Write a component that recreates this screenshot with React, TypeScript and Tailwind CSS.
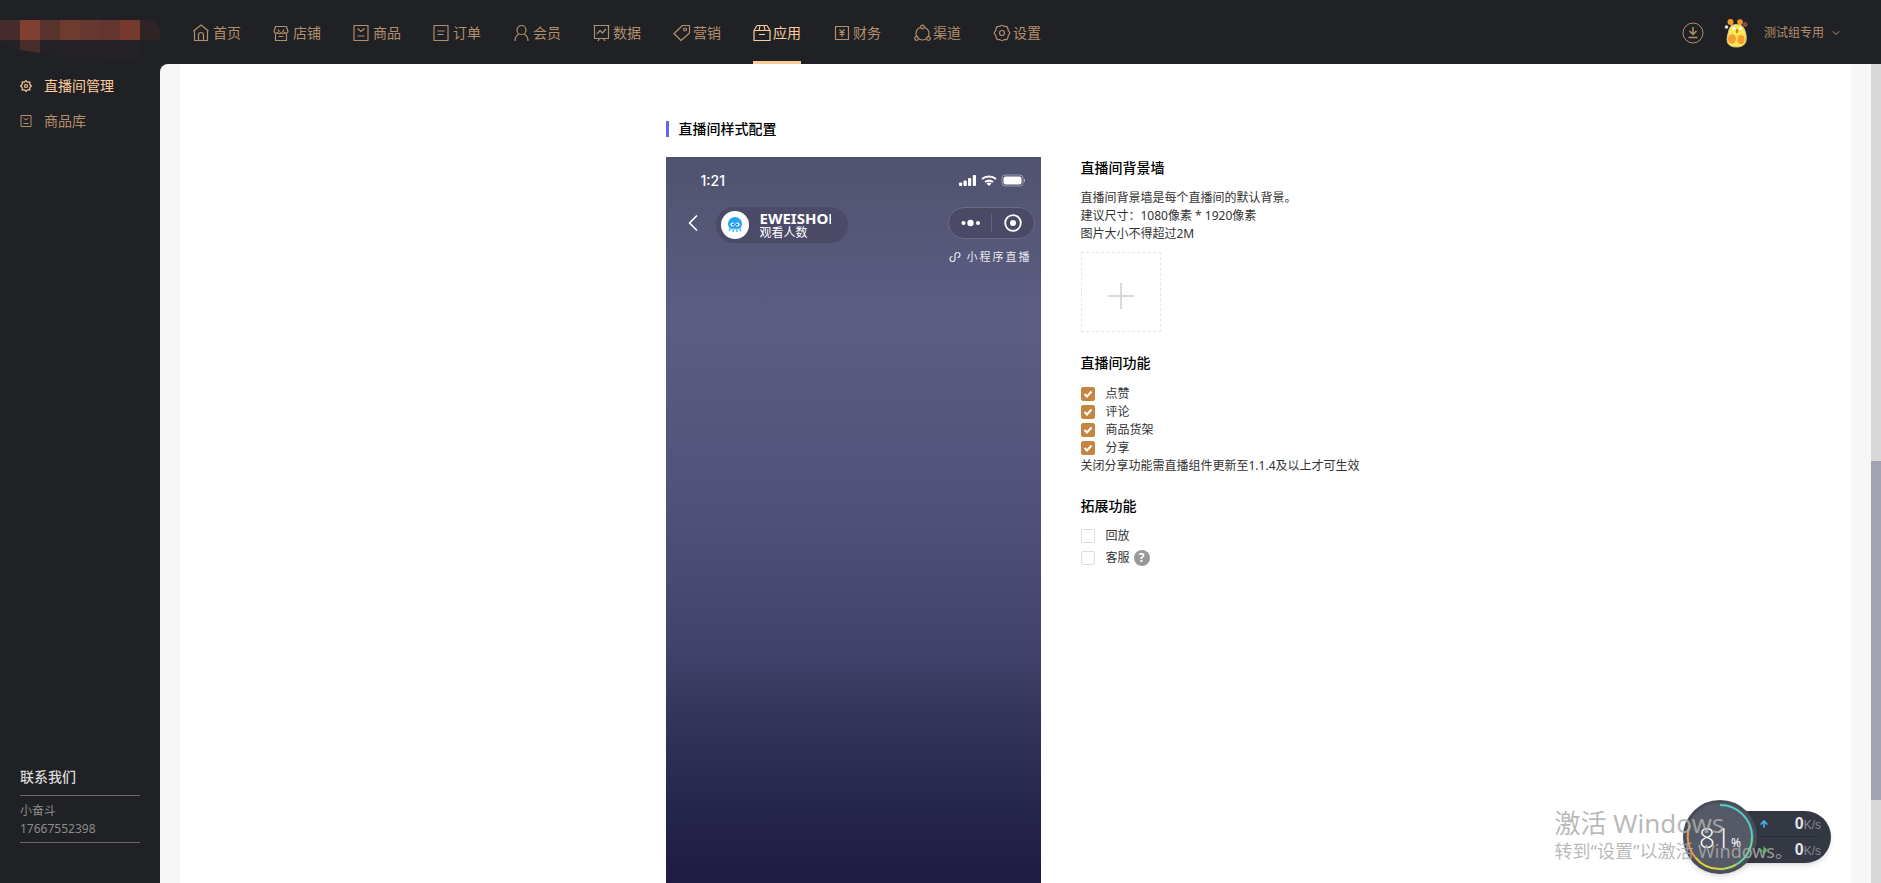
import React from "react";
import { ArrowDown, ArrowUp, ChevronDown, ChevronLeft } from "lucide-react";

const iconPaths: Record<string, React.ReactNode> = {
  home: (
    <>
      <path d="M.5 7L8 1L15.500 7M1.500 6.500V16.500H14.500V6.500" />
      <path d="M5.500 16V11A2.500 2.500 0 0 1 10.500 11V16" />
    </>
  ),
  shop: (
    <>
      <path d="M2.500 2.500H13.500L15 7.500A2 2 0 0 1 11.500 8.500A2 2 0 0 1 8 8.500A2 2 0 0 1 4.500 8.500A2 2 0 0 1 1 7.500Z" />
      <path d="M2.500 9.500V16.500H13.500V9.500M5 5.500L6.500 8M11 5.500L9.500 8M5.500 12.500H10.500" />
    </>
  ),
  goods: (
    <>
      <path d="M1 1.500H15V16.500H1Z" />
      <path d="M4.500 4.500L8 7.500L11.500 4.500M4.500 12H11.500" />
    </>
  ),
  order: (
    <>
      <path d="M1 1.500H15V16.500H1Z" />
      <path d="M4.500 7H11.500M4.500 10.500H10.500" />
    </>
  ),
  member: (
    <>
      <circle cx="8.500" cy="6" r="4.500" />
      <path d="M2 17C2 13 4 11 6 10M15 17C15 13 13 11 11 10" />
    </>
  ),
  data: (
    <>
      <path d="M.5 1.500H16.500M1.500 1.500V14.500H15.500V1.500M6.500 14.500L5 17M10.500 14.500L12 17" />
      <path d="M4 10L7 6.500L9.500 9L13 5" />
    </>
  ),
  sale: (
    <>
      <path d="M9.500 1.500L1 9.500L8 16.500L16.500 9V1.500Z" />
      <circle cx="12" cy="5.500" r="1.500" />
    </>
  ),
  app: (
    <path d="M1 6.500L4 1.500H14L17 6.500V16.500H1ZM1 6.500H17M7 1.500L6 6.500M11 1.500L12 6.500M6 10.500H12" />
  ),
  finance: (
    <>
      <path d="M2.500 2.500H15.500V15.500H2.500Z" />
      <path d="M6.500 5.500L9 8L11.500 5.500M6.500 8.500H11.500M6.500 10.500H11.500M9 8V13" />
    </>
  ),
  channel: (
    <>
      <circle cx="9.500" cy="9.500" r="6.500" />
      <g fill="#202125">
        <circle cx="9.500" cy="3" r="1.800" />
        <circle cx="3.500" cy="14.500" r="1.800" />
        <circle cx="15.500" cy="14.500" r="1.800" />
      </g>
    </>
  ),
  setting: (
    <>
      <path d="M7 2.500Q9 0 11 2.500Q14.500 1.500 15 5Q15 6 15.500 7Q18 9 15.500 11Q15 12 15 13Q14.500 16.500 11 15.500Q9 18 7 15.500Q3.500 16.500 3 13Q3 12 2.500 11Q0 9 2.500 7Q3 6 3 5Q3.500 1.500 7 2.500Z" />
      <circle cx="9" cy="9" r="2.500" />
    </>
  ),
};

const Icon = ({ name }: { name: string }) => (
  <svg
    width="18"
    height="18"
    viewBox="0 0 18 18"
    fill="none"
    stroke="currentColor"
    strokeWidth="1.200"
    strokeLinejoin="round"
    className="shrink-0"
    aria-hidden="true"
  >
    {iconPaths[name]}
  </svg>
);

const navItems = [
  { label: "首页", icon: "home" },
  { label: "店铺", icon: "shop" },
  { label: "商品", icon: "goods" },
  { label: "订单", icon: "order" },
  { label: "会员", icon: "member" },
  { label: "数据", icon: "data" },
  { label: "营销", icon: "sale" },
  { label: "应用", icon: "app", active: true },
  { label: "财务", icon: "finance" },
  { label: "渠道", icon: "channel" },
  { label: "设置", icon: "setting" },
];

const Avatar = () => (
  <svg width="24" height="30" viewBox="0 0 24 30" aria-hidden="true">
    <path d="M8 9L7 4M16 9L17 4" stroke="#d9c7a0" strokeWidth="1.500" />
    <circle cx="6.500" cy="4" r="3" fill="#f59a23" />
    <circle cx="16" cy="4" r="2.800" fill="#f59a23" />
    <circle cx="21" cy="6.500" r="2.500" fill="#8c4b3f" />
    <circle cx="2.500" cy="9" r="1.800" fill="#e8dde6" />
    <path d="M12.500 6.500C6 6.500 5 11 4 16C1.500 24 4 29 12.500 29S23 24 22 17C21 11 19 6.500 12.500 6.500Z" fill="#fbe94e" stroke="#d8c79a" strokeWidth="1" />
    <circle cx="10" cy="10.500" r="1.600" fill="#fff" />
    <circle cx="16.500" cy="10.500" r="1.600" fill="#fff" />
    <ellipse cx="13" cy="13" rx="1.200" ry="2.200" fill="#e8743a" />
    <ellipse cx="8" cy="21" rx="4" ry="4.800" fill="#fb9d33" />
    <ellipse cx="17" cy="21.500" rx="3.600" ry="4.500" fill="#fb9d33" />
  </svg>
);

const Header = () => (
  <header className="h-16 shrink-0 flex items-center bg-[#202125] text-[#b38e6a]">
    {/* Store logo */}
    <div className="w-[160px] mr-[33px] shrink-0">
      <svg width="160" height="64" viewBox="0 0 160 64" className="block" role="img" aria-label="logo">
        <path d="M0 20H20V40H0Z" fill="#452b2b" />
        <path d="M20 20H40V40H20Z" fill="#813f31" />
        <path d="M40 20H60V40H40Z" fill="#57332c" />
        <path d="M60 20H80V40H60Z" fill="#6e3b2e" />
        <path d="M80 20H100V40H80Z" fill="#66382f" />
        <path d="M100 20H120V40H100Z" fill="#63352e" />
        <path d="M120 20H140V40H120Z" fill="#76392e" />
        <path d="M140 20H147Q158 21 160 30V40H140Z" fill="#302325" />
        <path d="M0 40H20V50Q8 48 0 43Z" fill="#242225" />
        <path d="M20 40H40V53L20 50Z" fill="#482c2a" />
        <path d="M40 40H140V60Q80 58 40 53Z" fill="#242225" />
      </svg>
    </div>
    <nav className="h-full flex gap-8">
      {navItems.map((item) => (
        <a
          key={item.label}
          href="#"
          className={
            item.active
              ? "h-full pt-0.5 flex items-center gap-0.5 whitespace-nowrap text-sm border-y-3 border-t-transparent border-b-[#fccb9a] text-[#fccb9a]"
              : "h-full pt-0.5 flex items-center gap-0.5 whitespace-nowrap text-sm border-y-3 border-transparent"
          }
        >
          <Icon name={item.icon} />
          {item.label}
        </a>
      ))}
    </nav>
    <div className="ml-auto mr-[39px] pt-0.5 flex items-center">
      <button aria-label="下载" className="mr-5">
        <svg width="22" height="22" viewBox="0 0 22 22" fill="none" stroke="currentColor">
          <circle cx="11" cy="11" r="10" />
          <path d="M11 5V12M7.500 9L11 12.500L14.500 9M6.500 15.500H15.500" strokeWidth="1.500" />
        </svg>
      </button>
      <Avatar />
      <button className="ml-4 flex items-center gap-1.5 text-xs whitespace-nowrap">
        测试组专用
        <ChevronDown size={12} />
      </button>
    </div>
  </header>
);

const Sidebar = () => (
  <aside className="w-[160px] shrink-0 flex flex-col justify-between px-5 pt-1 pb-10 bg-[#202125]">
    <nav className="flex flex-col text-sm text-[#b38e6a]">
      <a href="#" className="flex items-center gap-3 h-[35px] text-[#fccb9a]">
        <svg width="12" height="12" viewBox="0 0 12 12" fill="none" stroke="currentColor" strokeWidth="1.200" aria-hidden="true">
          <path d="M6 .6L7.500 2.200L9.800 2.200L9.800 4.500L11.400 6L9.800 7.500V9.800H7.500L6 11.400L4.500 9.800H2.200V7.500L.6 6L2.200 4.500V2.200H4.500Z" />
          <circle cx="6" cy="6" r="1.500" />
        </svg>
        直播间管理
      </a>
      <a href="#" className="flex items-center gap-3 h-[35px]">
        <svg width="12" height="12" viewBox="0 0 12 12" fill="none" stroke="currentColor" aria-hidden="true">
          <path d="M1 .5H11V11.500H1ZM3.500 3L6 5L8.500 3M3.500 8.500H8.500" />
        </svg>
        商品库
      </a>
    </nav>
    <div className="text-xs text-[#8b8b8d]">
      <h3 className="pb-2 text-sm font-medium text-[#d9d9d9]">联系我们</h3>
      <div className="pt-1.5 pb-1 border-y border-[#6a6a6c] leading-[18px]">
        <p>小奋斗</p>
        <p>17667552398</p>
      </div>
    </div>
  </aside>
);

const PhonePreview = () => (
  <div className="w-[375px] h-[812px] shrink-0 bg-[linear-gradient(#50536e,#5b5d83_20%,#515279_42%,#43426b_60%,#36365c_68%,#26254c_80%,#1e1c41_89%,#1b193b)] text-white">
    <div className="h-12 flex items-center pl-[35px] pr-[15px] text-sm">
      <span className="font-[Inter] font-medium">1:21</span>
      <svg width="68" height="14" viewBox="0 0 68 14" fill="#fff" className="ml-auto" aria-hidden="true">
        <rect x="1" y="8.500" width="3.200" height="3.500" rx="1" />
        <rect x="5.500" y="6.500" width="3.200" height="5.500" rx="1" />
        <rect x="10" y="4" width="3.200" height="8" rx="1" />
        <rect x="14.800" y="1" width="3.200" height="11" rx="1" />
        <path d="M24 5A11 11 0 0 1 38 5M27 8A7 7 0 0 1 35 8" fill="none" stroke="#fff" strokeWidth="2" />
        <path d="M28.500 9.500Q31 7.500 33.500 9.500L31 12Z" />
        <rect x="44" y="1" width="21" height="11" rx="3" fill="none" stroke="#fff" strokeOpacity=".4" />
        <rect x="45.500" y="2.500" width="18" height="8" rx="2" />
        <path d="M66.500 5V8" stroke="#fff" strokeOpacity=".5" />
      </svg>
    </div>
    <div className="flex items-start pt-0.5 pl-[13px] pr-[6px]">
      <ChevronLeft size={28} strokeWidth={1.5} className="mt-0.5" />
      <div className="ml-[9px] w-[132px] h-9 px-[5px] flex items-center gap-[11px] rounded-full bg-[#4b4b67]">
        <svg width="28" height="28" viewBox="0 0 28 28" className="shrink-0" aria-hidden="true">
          <circle cx="14" cy="14" r="14" fill="#fff" />
          <path d="M7 12.500A7 6.500 0 0 1 21 12.500C21 15 20 16.500 19 18H9C8 16.500 7 15 7 12.500Z" fill="#25a4fb" />
          <path d="M10 17L8 20M12.500 17L12 21M15.500 17L16 21M18 17L20 20" stroke="#6cc0fb" strokeWidth="1.800" />
          <circle cx="11.500" cy="13.500" r="2" fill="#fff" />
          <circle cx="16.500" cy="13.500" r="2" fill="#fff" />
          <circle cx="12" cy="13.500" r="1" fill="#205b88" />
          <circle cx="16" cy="13.500" r="1" fill="#205b88" />
        </svg>
        <div className="w-[71px]">
          <p className="text-[15px] leading-4 font-bold whitespace-nowrap overflow-hidden">EWEISHOP</p>
          <p className="text-xs leading-[14px]">观看人数</p>
        </div>
      </div>
      <svg width="87" height="32" viewBox="0 0 87 32" className="ml-auto" aria-hidden="true">
        <rect x=".5" y=".5" width="86" height="31" rx="15.500" fill="#4a4a67" stroke="#6a6b85" />
        <path d="M43.500 6V25" stroke="#62637d" />
        <circle cx="15.500" cy="16" r="2" fill="#fff" />
        <circle cx="22.500" cy="16" r="3.200" fill="#fff" />
        <circle cx="30" cy="16" r="2" fill="#fff" />
        <circle cx="65" cy="16" r="7.800" fill="none" stroke="#fff" strokeWidth="1.800" />
        <circle cx="65" cy="16" r="3" fill="#fff" />
      </svg>
    </div>
    <div className="flex items-center justify-end gap-1.5 pt-[5px] pr-[9px] text-[11px] leading-[18px] tracking-[2px] text-[#e9e9f0]">
      <svg width="12" height="12" viewBox="0 0 12 12" fill="none" stroke="currentColor" strokeWidth="1.200" aria-hidden="true">
        <path d="M3.500 5.500A2.500 2.500 0 1 0 6 8V4A2.500 2.500 0 1 1 8.500 6.500" />
      </svg>
      小程序直播
    </div>
  </div>
);

const Check = ({ label, checked = false }: { label: string; checked?: boolean }) => (
  <label className="flex items-center gap-[11px]">
    <span className="relative size-3.5">
      <input
        type="checkbox"
        defaultChecked={checked}
        className="peer block size-3.5 appearance-none rounded-xs border border-[#dcdde0] bg-white checked:border-[#c88542] checked:bg-[#c88542]"
      />
      <svg
        viewBox="0 0 14 14"
        fill="none"
        stroke="#fff"
        strokeWidth="2"
        className="absolute inset-0 pointer-events-none opacity-0 peer-checked:opacity-100"
        aria-hidden="true"
      >
        <path d="M3.500 7L6 9.500L10.500 4.500" />
      </svg>
    </span>
    {label}
  </label>
);

const Settings = () => (
  <div className="text-xs leading-[18px] text-[#333]">
    <h3 className="mb-2.5 text-sm leading-[22px] font-medium text-black">直播间背景墙</h3>
    <p>直播间背景墙是每个直播间的默认背景。</p>
    <p>建议尺寸：1080像素 * 1920像素</p>
    <p>图片大小不得超过2M</p>
    <button aria-label="上传图片" className="mt-[9px] pt-2 size-20 flex items-center justify-center border border-dashed border-[#e6e6e6]">
      <svg width="26" height="26" viewBox="0 0 26 26" stroke="#dadada" strokeWidth="2">
        <path d="M13 0V26M0 13H26" />
      </svg>
    </button>

    <h3 className="mt-5 mb-2.5 text-sm leading-[22px] font-medium text-black">直播间功能</h3>
    <div className="pt-px">
      <Check label="点赞" checked />
      <Check label="评论" checked />
      <Check label="商品货架" checked />
      <Check label="分享" checked />
    </div>
    <p>关闭分享功能需直播组件更新至1.1.4及以上才可生效</p>

    <h3 className="mt-5 mb-2.5 text-sm leading-[22px] font-medium text-black">拓展功能</h3>
    <Check label="回放" />
    <div className="mt-1 flex items-center gap-1">
      <Check label="客服" />
      <button aria-label="帮助" className="size-4 rounded-full bg-[#999] text-xs leading-4 font-bold text-white">
        ?
      </button>
    </div>
  </div>
);

/* Desktop overlays in the bottom right corner */
const SpeedWidget = () => (
  <div className="absolute right-[50px] bottom-[9px] flex items-center text-white">
    <div className="relative z-10 size-[74px] flex items-center justify-center rounded-full bg-[#555a66] border-3 border-[#484d58] shadow-md">
      <svg width="68" height="68" viewBox="0 0 68 68" fill="none" strokeWidth="2" className="absolute" aria-hidden="true">
        <path d="M34 2A32 32 0 0 1 66 34" stroke="#4fcfc6" />
        <path d="M66 34A32 32 0 0 1 50 61.700" stroke="#62d8a0" />
        <path d="M50 61.700A32 32 0 0 1 34 66" stroke="#b5dc56" />
        <path d="M34 66A32 32 0 0 1 9 54" stroke="#e3cf3d" />
        <path d="M9 54A32 32 0 0 1 4 22" stroke="#f0924a" />
      </svg>
      <span className="font-['Open_Sans'] font-light text-[28px]">81</span>
      <span className="pt-3 text-xs">%</span>
    </div>
    <div className="-ml-5 w-[94px] h-[52px] pl-[22px] pr-2.5 flex flex-col rounded-r-full bg-[#343842] font-['Liberation_Sans'] shadow-md">
      <div className="h-[26px] flex items-center border-b border-[#2b2f38]">
        <ArrowUp size={10} strokeWidth={4} className="mr-auto text-[#45b1f5]" />
        <b className="text-base text-[#e3e5e8]">0</b>
        <span className="pt-0.5 text-xs text-[#868b95]">K/s</span>
      </div>
      <div className="h-[26px] flex items-center">
        <ArrowDown size={10} strokeWidth={4} className="mr-auto text-[#2fae3c]" />
        <b className="text-base text-[#e3e5e8]">0</b>
        <span className="pt-0.5 text-xs text-[#868b95]">K/s</span>
      </div>
    </div>
  </div>
);

const Watermark = () => (
  <div className="absolute z-20 right-[88px] bottom-5 whitespace-nowrap text-[#adadad]/85 pointer-events-none">
    <p className="text-[26px] leading-8">激活 Windows</p>
    <p className="text-lg leading-6">转到“设置”以激活 Windows。</p>
  </div>
);

const App = () => {
  return (
    <div className="relative h-screen flex flex-col overflow-hidden bg-[#202125] font-['Noto_Sans','Noto_Sans_CJK_SC',sans-serif]">
      <Header />
      <div className="flex-1 min-h-0 flex">
        <Sidebar />
        <main className="flex-1 px-5 overflow-hidden rounded-tl-lg bg-[#f7f7f7]">
          <div className="min-h-full bg-white pt-[54px]">
            <section className="w-[700px] mx-auto">
              <h2 className="flex items-center gap-2.5 mb-[17px] text-sm leading-[22px] font-medium text-black">
                <span className="w-[3px] h-4 bg-[#6266f0]" />
                直播间样式配置
              </h2>
              <div className="flex gap-10">
                <PhonePreview />
                <Settings />
              </div>
            </section>
          </div>
        </main>
        {/* Scrollbar */}
        <div className="w-2.5 shrink-0 flex flex-col bg-[#d8d8d8]">
          <div className="h-[48.5%]" />
          <div className="h-[41.4%] bg-[#a1a3b3]" />
        </div>
      </div>
      <SpeedWidget />
      <Watermark />
    </div>
  );
};

export default App;
